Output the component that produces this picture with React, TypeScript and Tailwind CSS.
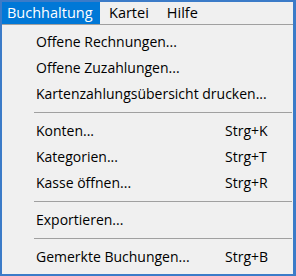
import React from 'react';

type Entry = { label: string; shortcut?: string } | 'sep';

const MENU: Entry[] = [
  { label: 'Offene Rechnungen...' },
  { label: 'Offene Zuzahlungen...' },
  { label: 'Kartenzahlungsübersicht drucken...' },
  'sep',
  { label: 'Konten...', shortcut: 'Strg+K' },
  { label: 'Kategorien...', shortcut: 'Strg+T' },
  { label: 'Kasse öffnen...', shortcut: 'Strg+R' },
  'sep',
  { label: 'Exportieren...' },
  'sep',
  { label: 'Gemerkte Buchungen...', shortcut: 'Strg+B' },
];

export default function App() {
  return (
    <div
      className="flex h-[276px] w-[296px] flex-col overflow-hidden whitespace-nowrap border-b-2 border-l-2 border-r-[3px] border-t-2 border-[#3b7bc8] bg-[#f0f0f0] text-[14px] leading-none text-black"
      style={{ fontFamily: '"Open Sans", "Noto Sans", sans-serif' }}
    >
      {/* Menu bar */}
      <div className="flex h-[22px] items-center text-[14.5px]">
        <div className="flex h-full w-[98px] items-center bg-[#0078d7] pl-[5px] text-white">Buchhaltung</div>
        <div className="ml-[9px]">Kartei</div>
        <div className="ml-[18px]">Hilfe</div>
      </div>
      <div className="h-px bg-[#a0a0a0]" />

      {/* Dropdown */}
      <div className="flex flex-col pt-1">
        {MENU.map((entry, i) =>
          entry === 'sep' ? (
            <div key={i} className="flex h-[11px] items-center pl-8 pr-px">
              <div className="h-px w-full bg-[#a0a0a0]" />
            </div>
          ) : (
            <div key={i} className="flex h-[26px] items-center pl-[34px]">
              <span className="w-[189px]">{entry.label}</span>
              {entry.shortcut && <span>{entry.shortcut}</span>}
            </div>
          )
        )}
      </div>
    </div>
  );
}
